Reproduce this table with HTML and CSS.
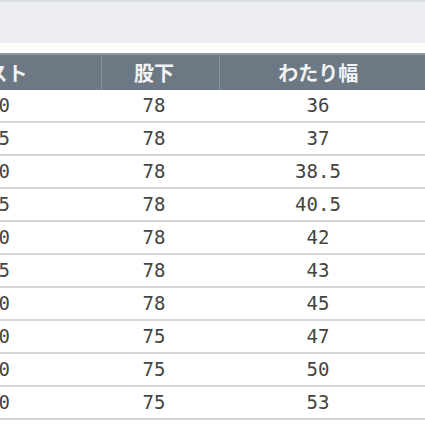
FILE: index.html
```html
<!DOCTYPE html>
<html lang="ja">
<head>
<meta charset="utf-8">
<link rel="stylesheet" href="styles.css">
</head>
<body>
<div class="topbar"></div>
<div class="gap"></div>
<div class="wrap">
<table class="size">
<colgroup><col class="c1"><col class="c2"><col class="c3"></colgroup>
<thead>
<tr><th class="first">ウエスト</th><th>股下</th><th>わたり幅</th></tr>
</thead>
<tbody>
<tr><td class="first">60</td><td>78</td><td>36</td></tr>
<tr><td class="first">65</td><td>78</td><td>37</td></tr>
<tr><td class="first">70</td><td>78</td><td>38.5</td></tr>
<tr><td class="first">75</td><td>78</td><td>40.5</td></tr>
<tr><td class="first">80</td><td>78</td><td>42</td></tr>
<tr><td class="first">85</td><td>78</td><td>43</td></tr>
<tr><td class="first">90</td><td>78</td><td>45</td></tr>
<tr><td class="first">100</td><td>75</td><td>47</td></tr>
<tr><td class="first">110</td><td>75</td><td>50</td></tr>
<tr><td class="first">120</td><td>75</td><td>53</td></tr>
</tbody>
</table>
</div>
</body>
</html>
```

FILE: styles.css
```css
html, body {
  margin: 0;
  padding: 0;
  background: #ffffff;
  overflow: hidden;
}
.topbar {
  height: 41px;
  background: #eceef4;
  border-top: 2px solid #dde0e6;
}
.gap {
  height: 10px;
  background: #fdfdfd;
}
.wrap {
  margin-left: -111px;
  width: 540px;
}
.size {
  border-collapse: collapse;
  table-layout: fixed;
  width: 540px;
}
.c1 { width: 212px; }
.c2 { width: 118px; }
.c3 { width: 210px; }
.size th {
  height: 35px;
  padding: 0 12px 0 0;
  background: #6c7883;
  border-top: 2px solid #8e98a2;
  border-left: 1px solid #87919b;
  color: #f1f3f5;
  font-family: "Noto Sans CJK JP", sans-serif;
  font-weight: bold;
  font-size: 20px;
  text-align: center;
  line-height: 1;
}
.size th.first {
  text-align: right;
  padding-right: 73px;
  border-left: none;
}
.size td {
  height: 31px;
  padding: 0 12px 0 0;
  border-bottom: 2px solid #d6d6d6;
  color: #444444;
  font-family: "DejaVu Sans Mono", monospace;
  font-size: 19px;
  text-align: center;
  line-height: 1;
}
.size td.first {
  text-align: right;
  padding-right: 91px;
}
```
